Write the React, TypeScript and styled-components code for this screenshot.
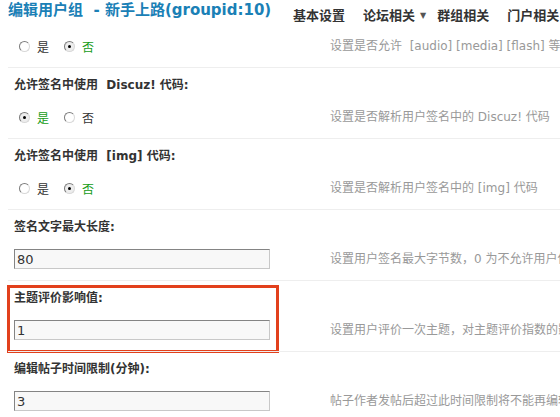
import * as React from 'react';
import styled, { createGlobalStyle, css } from 'styled-components';

type TSetting = {
  label?: string;
  tip: string;
  radio?: boolean;
  value?: string;
  highlight?: boolean;
};

const settings: TSetting[] = [
  { tip: '设置是否允许  [audio] [media] [flash] 等多媒体代码', radio: false },
  { label: '允许签名中使用  Discuz! 代码:', tip: '设置是否解析用户签名中的 Discuz! 代码', radio: true },
  { label: '允许签名中使用  [img] 代码:', tip: '设置是否解析用户签名中的 [img] 代码', radio: false },
  { label: '签名文字最大长度:', tip: '设置用户签名最大字节数，0 为不允许用户使用签名', value: '80' },
  { label: '主题评价影响值:', tip: '设置用户评价一次主题，对主题评价指数的影响', value: '1', highlight: true },
  { label: '编辑帖子时间限制(分钟):', tip: '帖子作者发帖后超过此时间限制将不能再编辑帖子', value: '3' },
];

const GlobalStyle = createGlobalStyle`
  html, body {
    margin: 0;
    padding: 0;
    background: #fff;
  }
  body {
    font-family: "DejaVu Sans", "Noto Sans CJK SC", sans-serif;
    font-size: 12px;
    color: #333;
    overflow: hidden;
  }
`;

const Page = styled.div`
  width: 560px;
  height: 417px;
  padding-left: 8px;
  box-sizing: border-box;
  overflow: hidden;
`;

const Header = styled.header`
  display: grid;
  grid-template-columns: 277px 1fr;
  height: 31px;
  white-space: pre;
`;

const Title = styled.h3`
  margin: 0;
  font-size: 15px;
  line-height: 20px;
  font-weight: bold;
  color: #1a80b6;
  overflow: hidden;
`;

const Nav = styled.nav`
  display: flex;
  font-size: 13px;
  line-height: 21px;
  font-weight: bold;
  color: #333;
  white-space: nowrap;
`;

const NavItem = styled.span<{ $menu?: boolean }>`
  display: flex;
  align-items: center;
  padding: ${(p) => (p.$menu ? '0 3px 0 8px' : '0 10px 0 8px')};
`;

const Caret = styled.span`
  margin-left: 5px;
  font-size: 8px;
  color: #555;
`;

const Setting = styled.section<{ $highlight?: boolean }>`
  position: relative;
  border-top: 1px solid #eeeeee;
  &:first-of-type {
    border-top: 0;
  }
  ${(p) =>
    p.$highlight &&
    css`
      &::after {
        content: '';
        position: absolute;
        top: 4px;
        left: -1px;
        width: 272px;
        height: 68px;
        box-sizing: border-box;
        border: 3px solid #e2401c;
        pointer-events: none;
      }
    `}
`;

const Label = styled.div`
  height: 34px;
  box-sizing: border-box;
  padding: 9px 6px 0;
  line-height: 16px;
  font-weight: bold;
  color: #333;
  white-space: pre;
`;

const ValueRow = styled.div`
  display: grid;
  grid-template-columns: 316px minmax(0, 1fr);
  align-items: center;
  padding: 5px 0 11px;
`;

const Field = styled.div`
  display: flex;
  align-items: center;
  height: 20px;
  padding: 0 6px;
`;

const Tip = styled.div`
  padding: 0 6px;
  line-height: 20px;
  color: #999;
  white-space: pre;
`;

const RadioGroup = styled.div`
  display: flex;
  align-items: center;
  gap: 10px;
`;

const RadioOption = styled.label<{ $checked?: boolean }>`
  display: flex;
  align-items: center;
  color: ${(p) => (p.$checked ? '#169c16' : '#333')};
`;

const RadioMark = styled.span<{ $checked?: boolean }>`
  position: relative;
  width: 11px;
  height: 11px;
  margin: 0 7px 0 5px;
  box-sizing: border-box;
  border-radius: 50%;
  border: 1px solid;
  border-color: #7c7c7c #d8d8d8 #d8d8d8 #7c7c7c;
  background: ${(p) => (p.$checked ? '#ededed' : '#fff')};
  &::after {
    content: '';
    display: ${(p) => (p.$checked ? 'block' : 'none')};
    position: absolute;
    left: 3px;
    top: 3px;
    width: 3px;
    height: 3px;
    border-radius: 50%;
    background: #000;
  }
`;

const TextInput = styled.input`
  width: 256px;
  height: 20px;
  margin: 0;
  padding: 0 2px;
  box-sizing: border-box;
  border: 1px solid;
  border-color: #848484 #c8c8c8 #c8c8c8 #848484;
  background: #f8f8f8;
  font-family: inherit;
  font-size: 13px;
  color: #333;
  outline: none;
`;

const YesNo = ({ yes }: { yes: boolean }) => (
  <RadioGroup>
    <RadioOption $checked={yes}>
      <RadioMark $checked={yes} />是
    </RadioOption>
    <RadioOption $checked={!yes}>
      <RadioMark $checked={!yes} />否
    </RadioOption>
  </RadioGroup>
);

export default function App() {
  return (
    <>
      <GlobalStyle />
      <Page>
        <Header>
          <Title>{'编辑用户组  - 新手上路(groupid:10)'}</Title>
          <Nav>
            <NavItem>基本设置</NavItem>
            <NavItem $menu>
              论坛相关<Caret>▼</Caret>
            </NavItem>
            <NavItem>群组相关</NavItem>
            <NavItem>门户相关</NavItem>
          </Nav>
        </Header>
        {settings.map((s, idx) => (
          <Setting key={idx} $highlight={s.highlight}>
            {s.label ? <Label>{s.label}</Label> : null}
            <ValueRow>
              <Field>
                {s.value !== undefined ? (
                  <TextInput defaultValue={s.value} readOnly />
                ) : (
                  <YesNo yes={!!s.radio} />
                )}
              </Field>
              <Tip>{s.tip}</Tip>
            </ValueRow>
          </Setting>
        ))}
      </Page>
    </>
  );
}
